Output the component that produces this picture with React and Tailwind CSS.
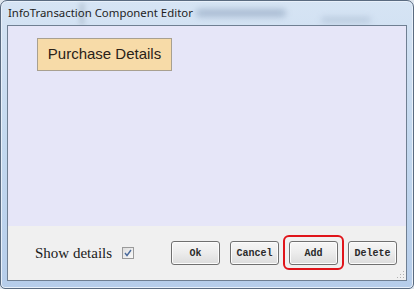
export default function App() {
  const btn =
    'h-[24px] w-[49px] rounded-[3px] border border-[#707070] bg-gradient-to-b from-[#f6f6f6] via-[#ececec] to-[#dcdcdc] text-[10px] font-bold text-[#2a2a2a] shadow-[inset_0_0_0_1px_#fcfcfc] flex items-center justify-center'
  return (
    <div className="w-[414px] h-[289px] bg-[#dfe6ee] overflow-hidden">
      <div className="relative w-[414px] h-[289px] rounded-t-[7px] rounded-b-[5px] border border-[#5a6b80] bg-gradient-to-b from-[#d6e4f4] via-[#c3d8ef] to-[#b6cdea] flex flex-col shadow-[inset_0_0_0_1px_#e8f0fa]">
        {/* blurred things behind the glass */}
        <div className="absolute left-[195px] top-[8px] w-[90px] h-[8px] rounded-full bg-[#8ea3bd] blur-[3px] opacity-60" />
        <div className="absolute left-[320px] top-[16px] w-[50px] h-[6px] rounded-full bg-[#9fb2c8] blur-[3px] opacity-50" />
        <div className="absolute left-[78px] top-[2px] w-[6px] h-[22px] bg-[#a8b8c8] blur-[2px] opacity-50" />
        <div className="relative h-[24px] flex items-center pl-[7px] text-[11.4px] text-[#1e1e1e]" style={{ fontFamily: '"Noto Sans", "Open Sans", sans-serif' }}>
          InfoTransaction Component Editor
        </div>
        <div className="relative mx-[6px] mb-[7px] flex-1 border border-[#6f7f92] flex flex-col">
          <div className="flex-1 bg-[#e6e6f8] pl-[29px] pt-[12px]">
            <div
              className="w-[135px] h-[33px] bg-[#f7dba8] border border-[#a8a090] flex items-center justify-center text-[15px] text-[#2a2218]"
              style={{ fontFamily: '"Liberation Sans", Arial, sans-serif' }}
            >
              Purchase Details
            </div>
          </div>
          <div className="relative h-[54px] bg-[#f0f0f0] flex items-center pl-[27px] pr-[9px]">
            <span className="text-[15px] text-[#1a1a1a]" style={{ fontFamily: '"Liberation Serif", "Times New Roman", serif' }}>
              Show details
            </span>
            <div className="ml-[10px] w-[12px] h-[12px] border border-[#9a9a9a] bg-gradient-to-br from-[#dedede] to-[#fafafa] flex items-center justify-center">
              <svg width="8" height="8" viewBox="0 0 8 8">
                <path d="M1 4 L3 6.5 L7 1" fill="none" stroke="#4a6a9c" strokeWidth="1.4" />
              </svg>
            </div>
            <div className="ml-auto flex items-center gap-[10px]" style={{ fontFamily: '"Liberation Mono", "DejaVu Sans Mono", monospace' }}>
              <div className={btn}>Ok</div>
              <div className={btn}>Cancel</div>
              <div className="relative">
                <div className="absolute -left-[6px] -top-[6px] -right-[6px] -bottom-[5px] rounded-[6px] border-2 border-[#e0141a]" />
                <div className={btn}>Add</div>
              </div>
              <div className={btn}>Delete</div>
            </div>
            <svg className="absolute right-[1px] bottom-[1px]" width="8" height="8" viewBox="0 0 8 8">
              <rect x="6" y="0" width="1" height="1" fill="#b0b0b0" />
              <rect x="3" y="3" width="1" height="1" fill="#b0b0b0" />
              <rect x="6" y="3" width="1" height="1" fill="#b0b0b0" />
              <rect x="0" y="6" width="1" height="1" fill="#b0b0b0" />
              <rect x="3" y="6" width="1" height="1" fill="#b0b0b0" />
              <rect x="6" y="6" width="1" height="1" fill="#b0b0b0" />
            </svg>
          </div>
        </div>
      </div>
    </div>
  )
}
